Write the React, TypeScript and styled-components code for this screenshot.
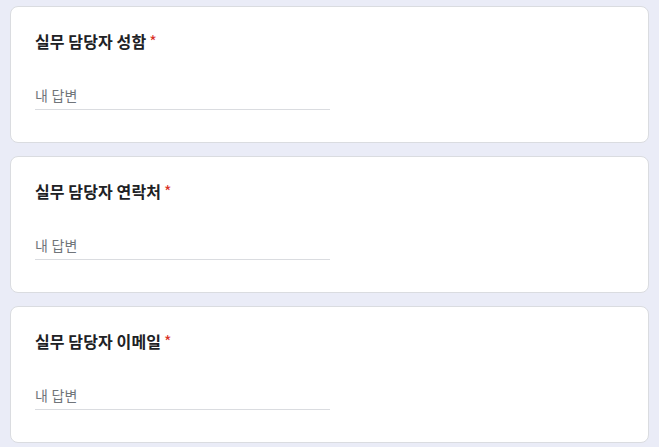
import React from "react";
import styled, { createGlobalStyle } from "styled-components";

const Global = createGlobalStyle`
  html, body {
    margin: 0;
    padding: 0;
    background: #eaecf7;
    font-family: "Noto Sans CJK KR", "Noto Sans", Roboto, sans-serif;
  }
`;

const Page = styled.div`
  display: flex;
  flex-direction: column;
  gap: 13px;
  padding: 6px 10px 6px 10px;
  width: 659px;
  box-sizing: border-box;
`;

const Card = styled.section`
  background: #ffffff;
  border: 1px solid #dadce0;
  border-radius: 8px;
  padding: 22px 24px 32px;
  display: flex;
  flex-direction: column;
`;

const Title = styled.div`
  font-size: 16px;
  line-height: 24px;
  font-weight: 700;
  color: #202124;
  letter-spacing: 0.1px;
`;

const Star = styled.span`
  color: #d93025;
  font-weight: 400;
  margin-left: 3px;
`;

const Answer = styled.div`
  margin-top: 32px;
  width: 50%;
  font-size: 14px;
  line-height: 20px;
  color: #70757a;
  letter-spacing: 0.2px;
  padding-bottom: 4px;
  border-bottom: 1px solid #dadce0;
`;

const questions = ["실무 담당자 성함", "실무 담당자 연락처", "실무 담당자 이메일"];

export default function App() {
  return (
    <>
      <Global />
      <Page>
        {questions.map((q) => (
          <Card key={q}>
            <Title>
              {q}
              <Star>*</Star>
            </Title>
            <Answer>내 답변</Answer>
          </Card>
        ))}
      </Page>
    </>
  );
}
